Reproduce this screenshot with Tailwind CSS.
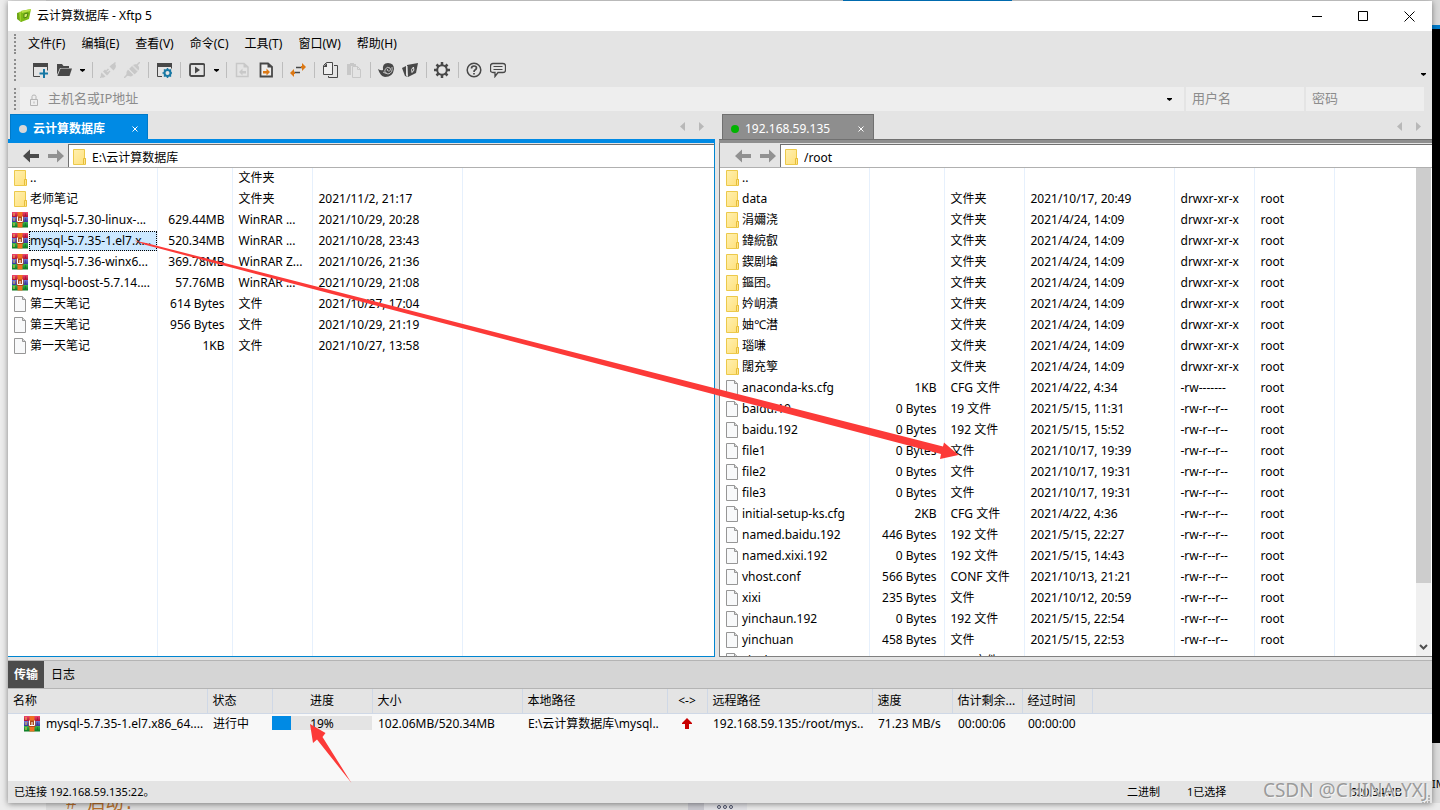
<!DOCTYPE html>
<html lang="zh-CN">
<head>
<meta charset="utf-8">
<title>云计算数据库 - Xftp 5</title>
<script src="https://cdn.jsdelivr.net/npm/@tailwindcss/browser@4"></script>
</head>
<body class="relative h-screen overflow-hidden bg-[#dcdcdc] font-['Noto_Sans','Noto_Sans_CJK_SC',sans-serif] text-xs text-black">

<!-- windows behind the client -->
<div class="absolute inset-0 flex flex-col" aria-hidden="true">
  <div class="flex h-[25px] shrink-0 bg-[#d9d9d9]"><span class="ml-[843px] h-px w-[169px] bg-[#007ccc]"></span></div>
  <div class="ml-auto h-1 w-2 shrink-0 bg-[#007ccc]"></div>
  <div class="ml-auto h-[714px] w-2 bg-black"></div>
  <div class="ml-auto flex-1"></div>
</div>
<div class="absolute inset-y-0 left-0 w-[46px] bg-[#ececec]" aria-hidden="true"></div>
<div class="absolute right-0 top-[776px] w-2 overflow-hidden text-[11px] leading-4" aria-hidden="true">IM</div>
<div class="absolute bottom-0 left-[46px] right-0 flex h-[7px] items-end overflow-hidden bg-[#dedede]" aria-hidden="true">
  <span class="ml-5 h-[7px] overflow-hidden font-['Liberation_Mono','Noto_Sans_CJK_SC',monospace] text-lg leading-[2px] text-[#b8702c]"># 启动:</span>
  <span class="absolute left-[642px] h-full w-4 bg-[#c9c9d0]"></span>
  <span class="absolute left-[658px] h-full w-[43px] bg-[#e2e2e6]"></span>
  <span class="absolute left-[671px] flex h-full items-center gap-0.5"><i class="size-1 rounded-full border border-[#4a5068]"></i><i class="size-1 rounded-full border border-[#4a5068]"></i><i class="size-1 rounded-full border border-[#4a5068]"></i></span>
  <span class="absolute left-[701px] right-0 h-full bg-[#ebebeb]"></span>
</div>

<svg class="absolute size-0" aria-hidden="true">
  <defs>
    <linearGradient id="fg" x1="0" y1="0" x2="1" y2="1"><stop offset="0" stop-color="#fff0b0"/><stop offset="1" stop-color="#ffe07a"/></linearGradient>
    <linearGradient id="rg" x1="0" y1="0" x2="0" y2="1"><stop offset="0" stop-color="#f0466e"/><stop offset="1" stop-color="#b01038"/></linearGradient>
    <linearGradient id="bg" x1="0" y1="0" x2="0" y2="1"><stop offset="0" stop-color="#7078d8"/><stop offset="1" stop-color="#3438a0"/></linearGradient>
    <linearGradient id="gg" x1="0" y1="0" x2="0" y2="1"><stop offset="0" stop-color="#38b850"/><stop offset="1" stop-color="#087820"/></linearGradient>
    <symbol id="folder" viewBox="0 0 16 16"><path d="M2.500.5h11v9h1v6h-12z" fill="url(#fg)" stroke="#ecc94b"/><path d="M12.500 15v-5.500h2V15" fill="#ffe68c" stroke="#e6bd3a"/></symbol>
    <symbol id="file" viewBox="0 0 16 16"><path d="M2.500.5h8l3 3v12h-11z" fill="#f8f9fa" stroke="#969696"/><path d="M10.500.5v3h3" fill="#d8d8d8" stroke="#969696"/></symbol>
    <symbol id="rar" viewBox="0 0 16 16"><path d="M0 0h16v5H0z" fill="url(#rg)"/><path d="M0 5h16v5H0z" fill="url(#bg)"/><path d="M0 10h16v5.500H0z" fill="url(#gg)"/><path d="M2 1v3M2 6v3M2 11v3" stroke="#f4c64a"/><path d="M13.500 1v3M13.500 6v3M13.500 11v3" stroke="#0003"/><path d="M5.500 0h5v15.500h-5z" fill="#f07020"/><path d="M4.500 4.500h7v6.500h-7z" fill="#b04a18"/><path d="M5.500 4.500v5h5v-5M8 6v3.500" fill="none" stroke="#fff"/></symbol>
  </defs>
</svg>

<main class="relative flex h-screen flex-col px-2 pb-[7px] pt-px">
<div class="flex min-h-0 flex-1 flex-col bg-[#e4e4e4] shadow-[0_1px_6px_rgba(0,0,0,0.45)]">

  <header class="flex h-[30px] shrink-0 items-center bg-white">
    <svg class="ml-2 size-4" viewBox="0 0 16 16"><path d="m1 5 3-1v8l2 1-1 1-4-3z" fill="#6fa818"/><path d="m3 4 4-1v9l-3 1z" fill="#9fd02c"/><path d="m5 3 10-2-2 10-8 3z" fill="#7dbb16"/><path d="m5 3 10-2-.5 2L6 5z" fill="#b9e04c"/><path d="m8 6 4-1-1 4-3 1z" fill="#d7ec70" stroke="#4c8410"/></svg>
    <h1 class="ml-[5px] text-xs">云计算数据库 - Xftp 5</h1>
    <div class="ml-auto flex h-full">
      <button aria-label="最小化" class="flex w-[46px] items-center justify-center"><svg class="size-[11px]" viewBox="0 0 11 11"><path d="M0 5.500h10" stroke="#000"/></svg></button>
      <button aria-label="最大化" class="flex w-[46px] items-center justify-center"><svg class="size-[11px]" viewBox="0 0 11 11"><path d="M.5.5h9v9h-9z" fill="none" stroke="#000"/></svg></button>
      <button aria-label="关闭" class="flex w-[46px] items-center justify-center"><svg class="size-[11px]" viewBox="0 0 11 11"><path d="m.5.500 10 10m0-10-10 10" stroke="#000"/></svg></button>
    </div>
  </header>

  <nav class="flex h-[26px] shrink-0 items-center pl-1.5" aria-label="菜单">
    <span class="h-5 border-l-2 border-dotted border-[#8c8c8c]"></span>
    <div class="ml-3 flex gap-4">
      <button>文件(F)</button><button>编辑(E)</button><button>查看(V)</button><button>命令(C)</button><button>工具(T)</button><button>窗口(W)</button><button>帮助(H)</button>
    </div>
  </nav>

  <div class="flex h-[30px] shrink-0 items-center pb-1 pl-1.5 pr-1.5" role="toolbar" aria-label="工具栏">
    <span class="h-[22px] border-l-2 border-dotted border-[#8c8c8c]"></span>
    <div id="tools" class="ml-3 flex h-6 items-center"></div>
    <button aria-label="工具栏选项" class="ml-auto mt-2"><svg class="h-[3px] w-[5px]" viewBox="0 0 5 3"><path d="M0 0h5v1L2.500 3 0 1z"/></svg></button>
  </div>

  <div class="flex h-6 shrink-0 items-center gap-0.5 pl-1.5 pr-2 text-[13px]">
    <span class="h-[22px] border-l-2 border-dotted border-[#8c8c8c]"></span>
    <div class="ml-0.5 flex h-6 flex-1 items-center bg-[#eee]">
      <svg class="ml-[9px] mt-0.5 h-3 w-[10px]" viewBox="0 0 10 12" fill="none" stroke="#b4b4b4"><path d="M1.500 5.500h7v6h-7zM3 5V2.500Q3 1 5 1t2 1.500V5M5 7.500v2"/></svg>
      <input aria-label="主机名或IP地址" placeholder="主机名或IP地址" class="ml-[9px] h-6 min-w-0 flex-1 pb-0.5 outline-none placeholder:text-[#8c8c8c]">
      <button aria-label="历史记录" class="mr-3"><svg class="h-[3px] w-[5px]" viewBox="0 0 5 3"><path d="M0 0h5v1L2.500 3 0 1z"/></svg></button>
    </div>
    <input aria-label="用户名" placeholder="用户名" class="h-6 w-[118px] bg-[#eee] pb-0.5 pl-1.5 outline-none placeholder:text-[#8c8c8c]">
    <input aria-label="密码" type="password" placeholder="密码" class="h-6 w-[118px] bg-[#eee] pb-0.5 pl-1.5 outline-none placeholder:text-[#8c8c8c]">
  </div>

  <div class="flex min-h-0 flex-1 gap-1 pt-[3px]">
    <section class="flex min-w-0 grow-[707] basis-0 flex-col" aria-label="本地">
      <div class="flex h-[25px] shrink-0 pl-0.5">
        <div class="flex w-[138px] items-center border border-b-0 border-[#0079c8] bg-[#008ae4] pl-2 pr-1.5 text-white">
          <span class="mt-1 size-2 rounded-full bg-[#d8d8d8]"></span><span class="ml-1.5 mt-1 font-bold">云计算数据库</span>
          <button aria-label="关闭标签" class="ml-auto mt-1"><svg class="size-3" viewBox="0 0 12 12"><path d="m3.500 3.500 5 5m0-5-5 5" stroke="#fff"/></svg></button>
        </div>
        <div class="ml-auto mr-[11px] flex items-center gap-3.5">
          <button aria-label="向左"><svg class="h-[9px] w-[5px]" viewBox="0 0 5 9"><path d="M5 0v9L0 4.500z" fill="#b8b8b8"/></svg></button>
          <button aria-label="向右"><svg class="h-[9px] w-[5px]" viewBox="0 0 5 9"><path d="M0 0v9l5-4.500z" fill="#b8b8b8"/></svg></button>
        </div>
      </div>
      <div class="h-1 shrink-0 bg-[#008ae4]"></div>
      <div class="flex min-h-0 flex-1 flex-col border-b border-r border-[#0085d0]">
        <div class="flex h-6 shrink-0 pt-px">
          <div class="flex w-[60px] items-center gap-[9px] pl-[15px]">
            <button aria-label="后退"><svg class="h-[14px] w-4" viewBox="0 0 16 14"><path d="M0 7l7-6.500V5h9v4H7v4.500z" fill="#4a4a4a"/></svg></button>
            <button aria-label="前进"><svg class="h-[14px] w-4" viewBox="0 0 16 14"><path d="M16 7L9 .5V5H0v4h9v4.500z" fill="#919191"/></svg></button>
          </div>
          <div class="flex flex-1 items-center border-l border-t border-[#707070] bg-white pl-0.5 pt-0.5">
            <svg class="size-4"><use href="#folder"/></svg>
            <input aria-label="本地路径" value="E:\云计算数据库" class="ml-[5px] h-5 min-w-0 flex-1 outline-none">
          </div>
        </div>
        <div class="min-h-0 flex-1 overflow-hidden border-t border-[#b0b0b0] bg-white">
          <table class="h-full w-full table-fixed border-collapse leading-5">
            <colgroup><col class="w-[149px]"><col class="w-[75px]"><col class="w-[80px]"><col class="w-[150px]"><col></colgroup>
            <tbody id="local"></tbody>
          </table>
        </div>
      </div>
    </section>

    <section class="flex min-w-0 grow-[713] basis-0 flex-col" aria-label="远程">
      <div class="flex h-[25px] shrink-0 pl-[3px]">
        <div class="flex w-[152px] items-center border border-b-0 border-[#707070] bg-[#8e8e8e] pl-2 pr-1.5 text-white">
          <span class="mt-1 size-2 rounded-full bg-[#00b400]"></span><span class="ml-1.5 mt-1">192.168.59.135</span>
          <button aria-label="关闭标签" class="ml-auto mt-1"><svg class="size-3" viewBox="0 0 12 12"><path d="m3.500 3.500 5 5m0-5-5 5" stroke="#fff"/></svg></button>
        </div>
        <div class="ml-auto mr-[11px] flex items-center gap-3.5">
          <button aria-label="向左"><svg class="h-[9px] w-[5px]" viewBox="0 0 5 9"><path d="M5 0v9L0 4.500z" fill="#b8b8b8"/></svg></button>
          <button aria-label="向右"><svg class="h-[9px] w-[5px]" viewBox="0 0 5 9"><path d="M0 0v9l5-4.500z" fill="#b8b8b8"/></svg></button>
        </div>
      </div>
      <div class="h-1 shrink-0 border-t border-[#707070] bg-[#8e8e8e]"></div>
      <div class="flex min-h-0 flex-1 flex-col border-b border-l border-[#808080]">
        <div class="flex h-6 shrink-0 pt-px">
          <div class="flex w-[60px] items-center gap-[9px] pl-[15px]">
            <button aria-label="后退"><svg class="h-[14px] w-4" viewBox="0 0 16 14"><path d="M0 7l7-6.500V5h9v4H7v4.500z" fill="#919191"/></svg></button>
            <button aria-label="前进"><svg class="h-[14px] w-4" viewBox="0 0 16 14"><path d="M16 7L9 .5V5H0v4h9v4.500z" fill="#919191"/></svg></button>
          </div>
          <div class="flex flex-1 items-center border-l border-t border-[#707070] bg-white pl-0.5 pt-0.5">
            <svg class="size-4"><use href="#folder"/></svg>
            <input aria-label="远程路径" value="/root" class="ml-[5px] h-5 min-w-0 flex-1 outline-none">
          </div>
        </div>
        <div class="flex min-h-0 flex-1 overflow-hidden border-t border-[#b0b0b0] bg-white">
          <div class="min-w-0 flex-1 overflow-hidden">
            <table class="w-full table-fixed border-collapse leading-5">
              <colgroup><col class="w-[149px]"><col class="w-[75px]"><col class="w-[80px]"><col class="w-[150px]"><col class="w-[80px]"><col class="w-[80px]"><col></colgroup>
              <tbody id="remote"></tbody>
            </table>
          </div>
          <div class="mr-px flex w-[15px] flex-col bg-[#f0f0f0]" aria-hidden="true">
            <span class="h-[85%] bg-[#cdcdcd]"></span>
            <svg class="mx-auto mb-[5px] mt-auto h-[7px] w-[9px]" viewBox="0 0 9 7"><path d="m1 1 3.500 3.500L8 1" fill="none" stroke="#505050" stroke-width="2"/></svg>
          </div>
        </div>
      </div>
    </section>
  </div>

  <section class="mt-[3px] flex shrink-0 flex-col" aria-label="传输">
    <div class="flex h-[29px] border-y border-[#b4b4b4] bg-[#d5d5d5]">
      <button class="w-9 bg-[#4c4c4c] text-center font-bold text-white">传输</button>
      <button class="w-[38px] text-center">日志</button>
    </div>
    <div class="h-[92px] overflow-hidden bg-[#f8f8f8]">
      <table class="w-full table-fixed border-collapse text-left">
        <colgroup><col class="w-[199px]"><col class="w-[65px]"><col class="w-[100px]"><col class="w-[150px]"><col class="w-[145px]"><col class="w-[40px]"><col class="w-[165px]"><col class="w-[80px]"><col class="w-[70px]"><col class="w-[70px]"><col></colgroup>
        <thead><tr id="qhead" class="h-6 border-b border-[#cfd8e6] bg-[#e4e4e4]"></tr></thead>
        <tbody><tr class="h-[21px] whitespace-nowrap leading-5">
          <td class="overflow-hidden pl-4"><div class="flex items-center"><svg class="size-4 shrink-0"><use href="#rar"/></svg><span class="ml-1.5">mysql-5.7.35-1.el7.x86_64....</span></div></td>
          <td class="pl-1.5">进行中</td>
          <td class="pt-0.5 align-top"><div class="relative h-3.5 bg-[#e4e4e4]"><div class="h-full bg-[#008ae4]" style="width:19%"></div><span class="absolute inset-0 text-center leading-4">19%</span></div></td>
          <td class="pl-1.5">102.06MB/520.34MB</td>
          <td class="pl-1.5">E:\云计算数据库\mysql..</td>
          <td><svg class="mx-auto h-[11px] w-[10px]" viewBox="0 0 10 11"><path d="m5 0 5 5v1H7v5H3V6H0V5z" fill="#c80000"/></svg></td>
          <td class="pl-1.5">192.168.59.135:/root/mys..</td>
          <td class="pl-1.5">71.23 MB/s</td>
          <td class="pl-1.5">00:00:06</td>
          <td class="pl-1.5">00:00:00</td>
          <td></td>
        </tr></tbody>
      </table>
    </div>
  </section>

  <footer class="flex h-[22px] shrink-0 items-center pl-1.5 pr-0.5 text-[11px]">
    <span>已连接 192.168.59.135:22。</span>
    <span class="ml-auto w-[60px]">二进制</span>
    <span class="w-[100px]">1已选择</span>
    <span class="w-[115px] text-right">520.34MB</span>
    <svg class="ml-5 h-2 w-2 self-end" viewBox="0 0 8 8"><path d="M6 0h2v2H6zM3 3h2v2H3zM6 3h2v2H6zM0 6h2v2H0zM3 6h2v2H3zM6 6h2v2H6z" fill="#b0b0b0"/></svg>
  </footer>
</div>
</main>

<!-- annotations -->
<svg class="pointer-events-none absolute left-0 top-0 h-[810px] w-[1440px]" viewBox="0 0 1440 810" fill="#fc3a38" aria-hidden="true">
  <path d="M134 240.500 146 243 943 446.500l1-4 14.500 12.500-18.500 4 1-5L146 245z"/>
  <path d="m310 724 15.500 9-3 4L351.500 783 317 739.500l-4 3.500z"/>
</svg>
<div class="pointer-events-none absolute bottom-1.5 right-3 text-[19px] leading-7 text-[#8c8c8c]/85 [text-shadow:1px_1px_0_#f4f4f4]">CSDN @CHINA-YXJ</div>

<script>
const K = '#484848', B = '#1878a4', O = '#dc7814', D = '#c8c8c8';
const icon = {
  add: `<path d="M8 14.500H1.500V2.500h14v6" fill="none" stroke="${K}"/><path d="M1 1h15v4H1z" fill="${K}"/><path d="M12 7v9M7.500 11.500h9" stroke="${B}" stroke-width="2"/>`,
  open: `<path d="M1 2h5l1.500 2H13v2H4L1 13z" fill="${K}"/><path d="M4.500 6.500H16L13.500 14H1.500z" fill="${K}"/>`,
  link: `<path d="m1.500 10.500 4 4q-2.500 2-4 .5t0-4.500zM5 7.500l4 4-2 2-4-4zM9.500 4.500l4 4q3.500-3 2-6t-6 2zM13 3l3-3" fill="${D}"/><path d="m6.500 9 2-2m-.5 4 2-2M12.500 3.500l3-3M0 16l2-2" stroke="${D}" stroke-width="1.500"/>`,
  unlink: `<path d="M0 16l4-4m8-8 4-4" stroke="${D}" stroke-width="1.500"/><path d="m4 7.500 5.500 5.500-2.500 1.500-4.500-1L2.500 10zM5 7l5.500 5.500L14 9 8.500 3.500zM9 3l5.500 5.500q1.500-3-.5-5T9 3z" fill="${D}"/><path d="m4.500 7 6 6M8 3.500l6 6" stroke="#e4e4e4" stroke-width=".8"/>`,
  prop: `<path d="M6 14.500H1.500V2.500h14v4" fill="none" stroke="${K}"/><path d="M1 1h15v4H1z" fill="${K}"/><circle cx="11.500" cy="11" r="3" fill="none" stroke="${B}" stroke-width="2"/><path d="M11.500 6v2m0 6v2m-5-5h2m6 0h2M8 7.500l1.200 1.200m4.600 4.600 1.200 1.200m0-7-1.200 1.200m-4.600 4.600L8 14.500" stroke="${B}" stroke-width="1.500"/>`,
  play: `<rect x="1" y="2" width="14.500" height="12" rx="1.500" fill="none" stroke="${K}" stroke-width="1.800"/><path d="m6 4.500 5 3.500-5 3.500z" fill="${K}"/>`,
  docl: `<path d="M2.500 1.500h7.500L14 5v9.500H2.500z" fill="none" stroke="${D}" stroke-width="1.500"/><path d="M9.500 1v4.500H14z" fill="${D}"/><path d="m5 10 3.500-3.500V9H12v2.500H8.500v2z" fill="${D}"/>`,
  docr: `<path d="M2.500 1.500h7.500L14 5v9.500H2.500z" fill="#eee" stroke="${K}" stroke-width="1.800"/><path d="M9.500 1v4.500H14z" fill="${K}"/><path d="M12 10 8.500 6.500V9H5v2.500h3.500v2z" fill="${O}"/>`,
  sync: `<path d="M0 11l4-4v8zM16 5l-4-4v8z" fill="${O}"/><path d="M4 10.500h6M6 5.500h6" stroke="${K}" stroke-width="1.500"/><path d="M3 10h2v2H3zM11 4h2v2h-2z" fill="${O}"/>`,
  copy: `<path d="M4.500.5h6v12h-9v-9z" fill="#eee" stroke="${K}"/><path d="M1 5l4-4v4z" fill="${K}"/><path d="M12 3.500h3.500v12h-9V14" fill="none" stroke="${K}"/>`,
  paste: `<path d="M1 2h3V1h4v1h2v2H5v9H1z" fill="${D}"/><path d="M6.500 4.500h5l3 3v8h-8z" fill="#e4e4e4" stroke="${D}"/><path d="M11.500 4.500v3h3" fill="none" stroke="${D}"/>`,
  shell: `<path d="M0 7q3 2 5 1Q4 1 10 1q6 0 6 6-1 8-9 8-5-1-7-8z" fill="${K}"/><path d="M5 10q3 2 4 1M14 5q1 6-4 7-4-1-3-4.500 2-3.500 5-1.500 1.500 3-1.500 3-2-.5-1-2" fill="none" stroke="#d4d4d4" stroke-width=".9"/>`,
  ftp: `<path d="M0 6l4-2v9l2 2-3-1zM5 3l11-2-2 10-8 4z" fill="${K}"/><path d="M11.500 5q-3 2-1.500 5.500 3-2 1.500-5.500zM5 4v10" fill="none" stroke="#e4e4e4"/>`,
  gear: `<circle cx="8" cy="8" r="4.800" fill="none" stroke="${K}" stroke-width="2"/><path d="M8 0v3m0 10v3M0 8h3m10 0h3M2.500 2.500l2 2m7 7 2 2m0-11-2 2m-7 7-2 2" stroke="${K}" stroke-width="2.500"/>`,
  help: `<circle cx="8" cy="8" r="6.800" fill="none" stroke="${K}" stroke-width="1.500"/><path d="M5.500 6.500Q5.500 4 8 4t2.500 2Q10.500 7 9 8 8 8.500 8 10m0 1v1.600" fill="none" stroke="${K}" stroke-width="1.700"/>`,
  chat: `<path d="M3 1.500h10q2.500 0 2.500 2.500v4q0 2.500-2.500 2.500H8L5 14.500v-4H3Q.5 10.500.5 8V4Q.5 1.500 3 1.500z" fill="none" stroke="${K}" stroke-width="1.300"/><path d="M3.500 4.500h9m-9 3h9" stroke="${K}"/>`
};
const caret = '<svg class="h-[3px] w-[5px]" viewBox="0 0 5 3"><path d="M0 0h5v1L2.500 3 0 1z"/></svg>';
document.getElementById('tools').innerHTML = [
  ['add','新建'],['open','打开'],'v','|',['link','重新连接'],['unlink','断开'],'|',['prop','属性'],'|',['play','传输'],'v','|',
  ['docl','下载'],['docr','上传'],'|',['sync','同步'],'|',['copy','复制'],['paste','粘贴'],'|',['shell','Xshell'],['ftp','Xftp'],'|',['gear','选项'],'|',['help','帮助'],['chat','反馈']
].map(t => t === '|' ? '<span class="flex h-4 w-2 justify-center"><i class="w-px bg-[#bdbdbd]"></i></span>'
  : t === 'v' ? `<button aria-label="更多" class="flex w-3 justify-center">${caret}</button>`
  : `<button aria-label="${t[1]}" class="flex h-6 ${t[0] === 'play' ? 'w-[26px]' : 'w-6'} items-center justify-center"><svg class="size-4" viewBox="0 0 16 16">${icon[t[0]]}</svg></button>`).join('');

function rows(list, cols) {
  return list.map((r, i) => {
    const sel = r[6];
    return `<tr class="${i ? 'h-[21px]' : 'h-5'} whitespace-nowrap">` +
      `<td class="overflow-hidden border-r border-[#e6f0fc] p-0 pl-1"><div class="flex items-center"><svg class="size-4 shrink-0"><use href="#${r[0]}"/></svg>` +
      `<span class="${sel ? 'ml-px flex-1 border border-dotted border-black bg-[#cce8ff] leading-[18px]' : 'ml-0.5'}">${r[1]}</span></div></td>` +
      `<td class="border-r border-[#e6f0fc] p-0 pr-[7px] text-right">${r[2]}</td>` +
      [3, 4, 5, 7].slice(0, cols).map(k => `<td class="overflow-hidden border-r border-[#e6f0fc] p-0 pl-1.5">${r[k] || ''}</td>`).join('') + '<td class="p-0"></td></tr>';
  }).join('');
}
const local = [
  ['folder','..','','文件夹',''],['folder','老师笔记','','文件夹','2021/11/2, 21:17'],
  ['rar','mysql-5.7.30-linux-...','629.44MB','WinRAR ...','2021/10/29, 20:28'],
  ['rar','mysql-5.7.35-1.el7.x...','520.34MB','WinRAR ...','2021/10/28, 23:43','',true],
  ['rar','mysql-5.7.36-winx6...','369.78MB','WinRAR Z...','2021/10/26, 21:36'],
  ['rar','mysql-boost-5.7.14....','57.76MB','WinRAR ...','2021/10/29, 21:08'],
  ['file','第二天笔记','614 Bytes','文件','2021/10/27, 17:04'],
  ['file','第三天笔记','956 Bytes','文件','2021/10/29, 21:19'],
  ['file','第一天笔记','1KB','文件','2021/10/27, 13:58']];
const edge = '<td class="border-r border-[#e6f0fc] p-0"></td>';
document.getElementById('local').innerHTML = rows(local, 2) + '<tr>' + edge.repeat(4) + '<td class="p-0"></td></tr>';

const dir = (n, d) => ['folder', n, '', '文件夹', d, 'drwxr-xr-x', false, 'root'];
const file = (n, s, t, d) => ['file', n, s, t, d, '-rw-r--r--', false, 'root'];
const remote = [['folder','..','','','','',false,''], dir('data','2021/10/17, 20:49'),
  ...['涓嬭浇','鍏綂叡','鍥剧墖','鏂囨。','妗岄潰','妯℃澘','瑙嗛','闊充箰'].map(n => dir(n, '2021/4/24, 14:09')),
  ['file','anaconda-ks.cfg','1KB','CFG 文件','2021/4/22, 4:34','-rw-------',false,'root'],
  file('baidu.19','0 Bytes','19 文件','2021/5/15, 11:31'), file('baidu.192','0 Bytes','192 文件','2021/5/15, 15:52'),
  file('file1','0 Bytes','文件','2021/10/17, 19:39'), file('file2','0 Bytes','文件','2021/10/17, 19:31'), file('file3','0 Bytes','文件','2021/10/17, 19:31'),
  file('initial-setup-ks.cfg','2KB','CFG 文件','2021/4/22, 4:36'), file('named.baidu.192','446 Bytes','192 文件','2021/5/15, 22:27'),
  file('named.xixi.192','0 Bytes','192 文件','2021/5/15, 14:43'), file('vhost.conf','566 Bytes','CONF 文件','2021/10/13, 21:21'),
  file('xixi','235 Bytes','文件','2021/10/12, 20:59'), file('yinchaun.192','0 Bytes','192 文件','2021/5/15, 22:54'),
  file('yinchuan','458 Bytes','文件','2021/5/15, 22:53'), file('yinchuan.192','0 Bytes','192 文件','2021/5/15, 22:53')];
document.getElementById('remote').innerHTML = rows(remote, 4);
document.getElementById('qhead').innerHTML = ['名称','状态','进度','大小','本地路径','<->','远程路径','速度','估计剩余...','经过时间',''].map((h, i) =>
  `<th class="${i === 10 ? 'p-0' : i === 2 || i === 5 ? 'border-r border-[#cfd8e6] p-0 text-center font-normal' : 'whitespace-nowrap border-r border-[#cfd8e6] p-0 pl-[5px] font-normal'}">${h.replace('<', '&lt;')}</th>`).join('');
</script>
</body>
</html>
